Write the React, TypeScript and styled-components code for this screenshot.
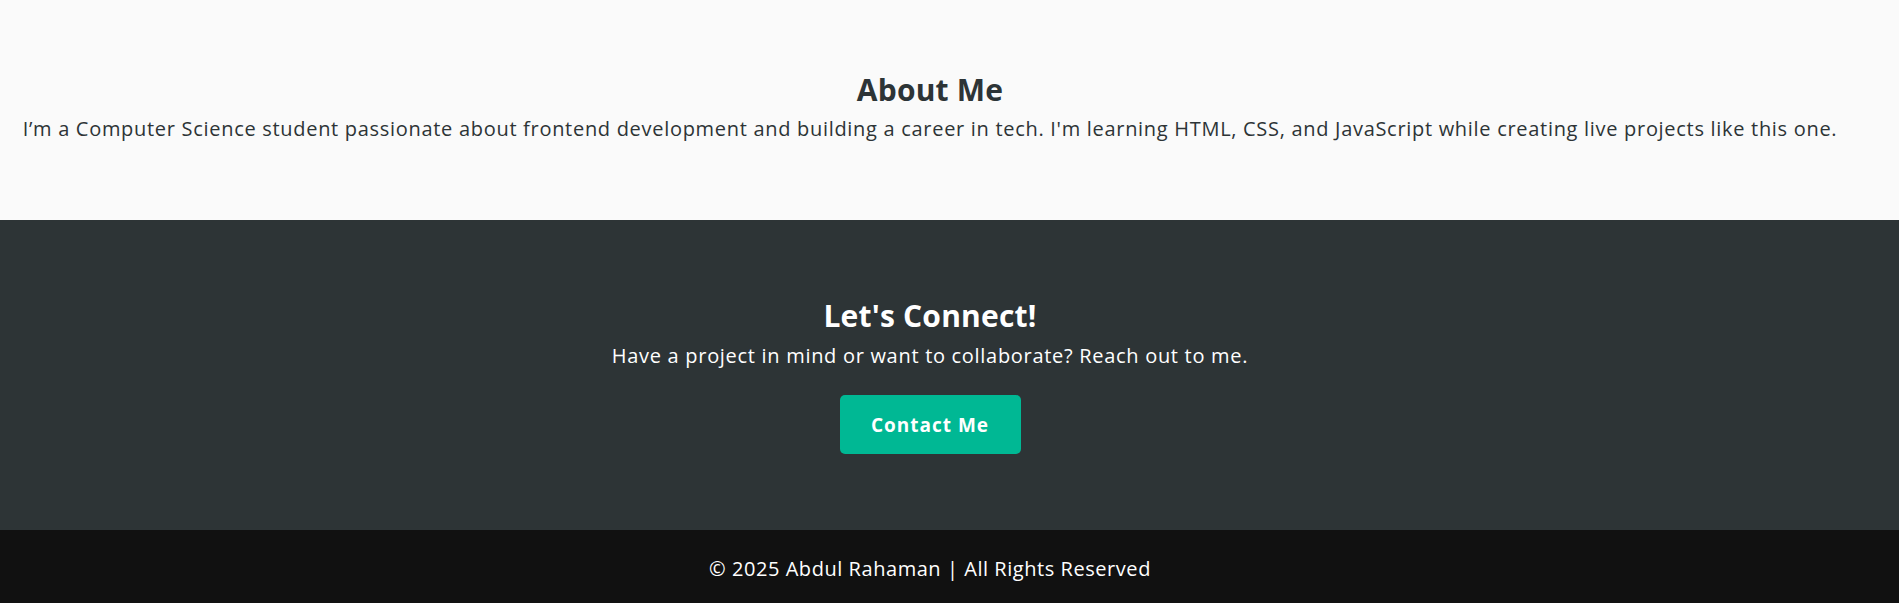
import React, { useLayoutEffect } from "react";
import styled, { createGlobalStyle } from "styled-components";

const GlobalStyle = createGlobalStyle`
  * { box-sizing: border-box; }
  html, body { margin: 0; padding: 0; }
  body {
    font-family: "Open Sans", "Liberation Sans", sans-serif;
    background: #fafafa;
    color: #2d3436;
  }
`;

const Section = styled.section<{ $bg: string; $fg: string; $pt: number; $pb: number }>`
  background: ${(p) => p.$bg};
  color: ${(p) => p.$fg};
  padding: ${(p) => p.$pt}px 39px ${(p) => p.$pb}px 0;
  display: flex;
  flex-direction: column;
  align-items: center;
  text-align: center;
`;

const Heading = styled.h2<{ $gap: number }>`
  margin: 0 0 ${(p) => p.$gap}px;
  font-size: 30px;
  line-height: 36px;
  font-weight: 700;
  letter-spacing: 0.2px;
`;

const Text = styled.p`
  margin: 0;
  font-size: 20px;
  line-height: 28.5px;
  font-weight: 400;
  letter-spacing: 0.7px;
`;

const FooterText = styled(Text)`
  letter-spacing: 0.55px;
`;

const Button = styled.a`
  margin-top: 25px;
  display: inline-flex;
  align-items: center;
  justify-content: center;
  width: 181px;
  height: 59px;
  background: #00b894;
  color: #ffffff;
  border-radius: 5px;
  font-size: 19px;
  font-weight: 700;
  letter-spacing: 1px;
  text-decoration: none;
  cursor: pointer;
`;

const Footer = styled.footer`
  background: #111111;
  color: #ffffff;
  padding: 25px 39px 19px 0;
  text-align: center;
`;

export default function App() {
  useLayoutEffect(() => {
    window.scrollTo(0, document.documentElement.scrollHeight);
  }, []);

  return (
    <>
      <GlobalStyle />
      <Section $bg="#fafafa" $fg="#2d3436" $pt={151} $pb={76}>
        <Heading $gap={7}>About Me</Heading>
        <Text>
          I’m a Computer Science student passionate about frontend development and building a career in
          tech. I'm learning HTML, CSS, and JavaScript while creating live projects like this one.
        </Text>
      </Section>
      <Section $bg="#2d3436" $fg="#ffffff" $pt={78} $pb={76}>
        <Heading $gap={8}>Let's Connect!</Heading>
        <Text>Have a project in mind or want to collaborate? Reach out to me.</Text>
        <Button>Contact Me</Button>
      </Section>
      <Footer>
        <FooterText>© 2025 Abdul Rahaman | All Rights Reserved</FooterText>
      </Footer>
    </>
  );
}
